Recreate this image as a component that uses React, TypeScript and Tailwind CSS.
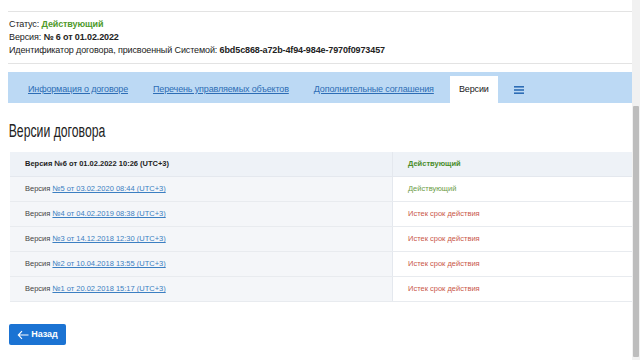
const rows = [
  { num: '№5 от 03.02.2020 08:44 (UTC+3)', status: 'Действующий', active: true },
  { num: '№4 от 04.02.2019 08:38 (UTC+3)', status: 'Истек срок действия', active: false },
  { num: '№3 от 14.12.2018 12:30 (UTC+3)', status: 'Истек срок действия', active: false },
  { num: '№2 от 10.04.2018 13:55 (UTC+3)', status: 'Истек срок действия', active: false },
  { num: '№1 от 20.02.2018 15:17 (UTC+3)', status: 'Истек срок действия', active: false },
]

export default function App() {
  return (
    <div className="flex h-[360px] w-[640px] overflow-hidden bg-white font-['Liberation_Sans',Arial,sans-serif] text-[#222]">
      <main className="flex-1 pl-2">
        {/* top of page, cut off */}
        <div className="h-3 border-b border-[#e3e3e3]" />

        <div className="border-b border-[#e3e3e3] pt-[6px] pb-[6px] pl-[1px] text-[9px] leading-[13px] tracking-[-0.12px]">
          <div>
            Статус: <span className="font-bold text-[#4f9a2c]">Действующий</span>
          </div>
          <div>
            Версия: <span className="font-bold">№ 6 от 01.02.2022</span>
          </div>
          <div>
            Идентификатор договора, присвоенный Системой:{' '}
            <span className="font-bold">6bd5c868-a72b-4f94-984e-7970f0973457</span>
          </div>
        </div>

        {/* tabs */}
        <nav className="mt-2 flex h-[31px] items-end bg-[#bcd9f4] pl-5 text-[9px] tracking-[-0.15px]">
          <a className="mr-[25px] flex h-[27px] items-center text-[#2d6db5] underline">Информация о договоре</a>
          <a className="mr-[25px] flex h-[27px] items-center text-[#2d6db5] underline">Перечень управляемых объектов</a>
          <a className="mr-[16px] flex h-[27px] items-center text-[#2d6db5] underline">Дополнительные соглашения</a>
          <div className="flex h-[27px] w-[48px] items-center justify-center bg-white text-[#222]">Версии</div>
          <div className="flex h-[27px] items-center pl-4">
            <svg width="10" height="8" viewBox="0 0 10 8" fill="#2d6db5">
              <rect x="0" y="0" width="10" height="1.6" />
              <rect x="0" y="3.2" width="10" height="1.6" />
              <rect x="0" y="6.4" width="10" height="1.6" />
            </svg>
          </div>
        </nav>

        <h1 className="mt-[17px] origin-left scale-x-[0.68] pl-[1px] text-[18px] leading-[22px] text-[#222]">
          Версии договора
        </h1>

        {/* versions table */}
        <div className="mt-[10px] ml-[2px] text-[7.5px] leading-none">
          <div className="flex h-[25px] border-b border-[#e4e8ee] bg-[#eef2f7]">
            <div className="flex w-[383px] items-center border-r border-[#e4e8ee] pl-[15px] font-bold">
              Версия №6 от 01.02.2022 10:26 (UTC+3)
            </div>
            <div className="flex flex-1 items-center pl-[15px] font-bold text-[#4a8d2b]">Действующий</div>
          </div>
          {rows.map((r) => (
            <div key={r.num} className="flex h-[25px] border-b border-[#e8ebef]">
              <div className="flex w-[383px] items-center border-r border-[#e4e8ee] bg-[#f4f6f9] pl-[15px] text-[#444]">
                Версия&nbsp;<a className="text-[#3b7fc2] underline">{r.num}</a>
              </div>
              <div className={`flex flex-1 items-center pl-[15px] ${r.active ? 'text-[#6c9d48]' : 'text-[#c9584a]'}`}>
                {r.status}
              </div>
            </div>
          ))}
        </div>

        <button className="mt-[22px] ml-[1px] flex h-[21px] w-[57px] items-center justify-center gap-[2px] rounded-[2px] bg-[#1b73d3] text-[9px] font-bold text-white">
          <svg width="12" height="10" viewBox="0 0 12 10" fill="none" stroke="white" strokeWidth="1.1">
            <path d="M11.5 5H1.5M5 1.2L1.3 5 5 8.8" />
          </svg>
          Назад
        </button>
      </main>

      {/* browser scrollbar */}
      <div className="flex w-2 flex-col bg-[#f1f1f1]">
        <div className="h-[106px]" />
        <div className="mx-[1px] flex-1 rounded-[1px] bg-[#bdbdbd]" />
        <div className="h-[3px]" />
      </div>
    </div>
  )
}
